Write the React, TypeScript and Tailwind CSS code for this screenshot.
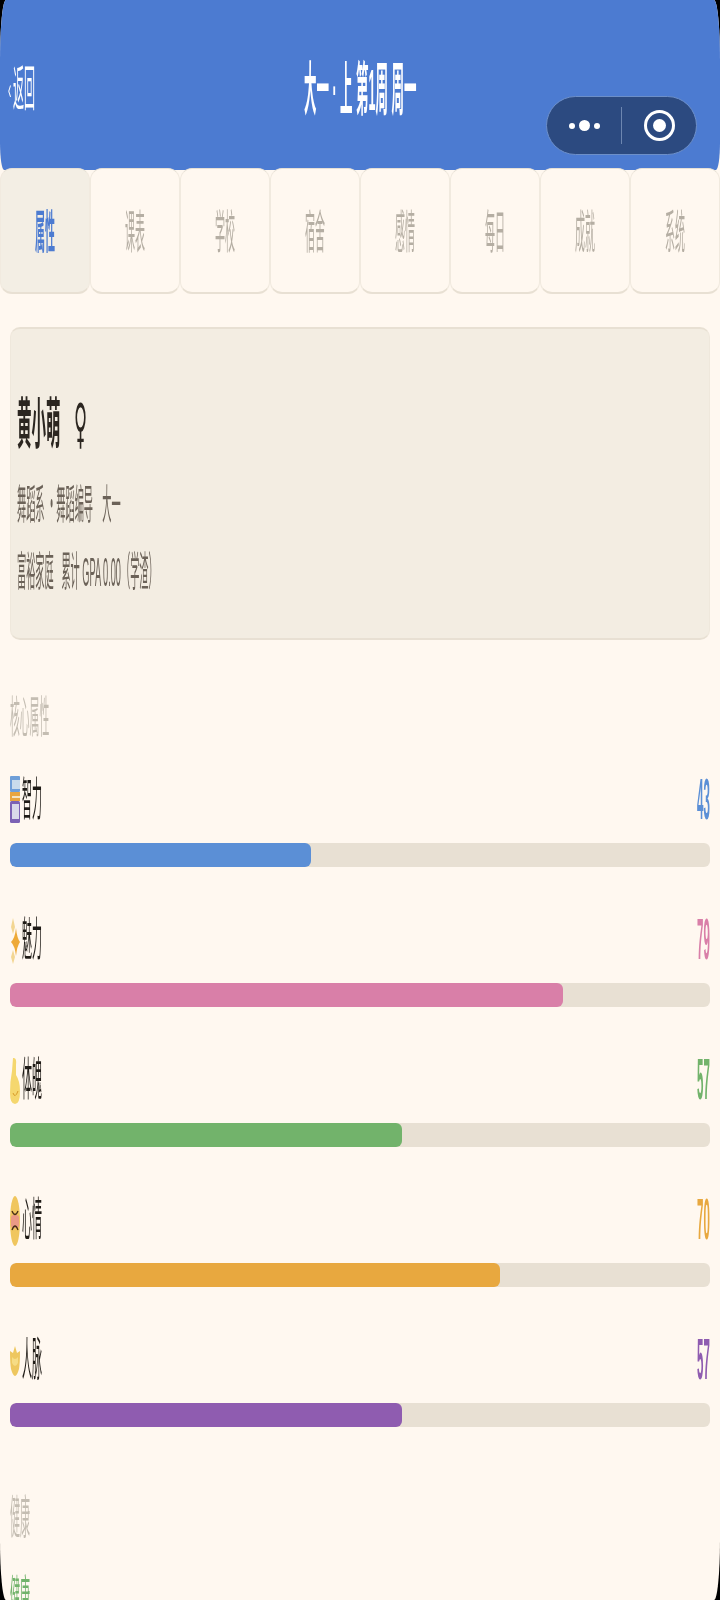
import { ReactNode } from "react";

const cjk = "font-['Liberation_Sans','Noto_Sans_CJK_SC',sans-serif]";

const tabs = ["属性", "课表", "学校", "宿舍", "感情", "每日", "成就", "系统"];

interface Attr {
  label: string;
  value: number;
  shown: number;
  text: string;
  bar: string;
  icon: ReactNode;
}

const BookIcon = () => (
  <svg viewBox="0 0 10 47" className="-mt-[3px] h-[47px] w-[10px]">
    <rect x="0" y="0" width="10" height="16" rx="1" fill="#6f9fd8" />
    <rect x="2" y="4" width="8" height="9" fill="#c9dcec" />
    <rect x="0" y="16" width="10" height="9" fill="#e8a53f" />
    <rect x="2" y="20" width="8" height="2" fill="#f3e3c2" />
    <rect x="0" y="25" width="10" height="22" rx="1.5" fill="#7c62b5" />
    <rect x="2" y="28" width="7" height="15" fill="#d9d9ea" />
  </svg>
);

const SparkleIcon = () => (
  <svg viewBox="0 0 10 46" className="h-[46px] w-[10px]">
    <path d="M3 0 L5 9 L3 16 L1 9 Z" fill="#f3d692" />
    <path d="M6 10 Q7 20 10 24 Q7 28 6 38 Q5 28 1 24 Q5 20 6 10 Z" fill="#eeaa38" />
    <path d="M3 32 L5 39 L3 46 L1 39 Z" fill="#f3d692" />
  </svg>
);

const ArmIcon = () => (
  <svg viewBox="0 0 10 48" className="h-[48px] w-[10px]">
    <path d="M3 1 Q7 0 6 8 L6 18 Q10 24 10 34 Q10 47 5 47 Q0 47 0 36 Q0 24 2 14 Z" fill="#f5d76e" />
    <path d="M3 36 Q5 42 8 34" stroke="#d99c2b" strokeWidth="1" fill="none" />
  </svg>
);

const FaceIcon = () => (
  <svg viewBox="0 0 10 50" className="h-[50px] w-[10px]">
    <ellipse cx="5" cy="25" rx="5" ry="25" fill="#f0c65e" />
    <rect x="1" y="19" width="8" height="13" rx="3" fill="#ea9a85" />
    <path d="M2 15 Q5 22 8 15 M2 34 Q5 26 8 34" stroke="#4a3018" strokeWidth="1.3" fill="none" />
  </svg>
);

const HandIcon = () => (
  <svg viewBox="0 0 10 32" className="h-[32px] w-[10px]">
    <path d="M0 6 L3 8 L5 1 L7 8 L10 6 Q10 18 9 24 Q7 31 5 31 Q3 31 1 24 Q0 18 0 6 Z" fill="#eec75f" />
    <path d="M2 12 Q5 16 8 12 L8 18 Q5 24 2 18 Z" fill="#f6dc85" />
  </svg>
);

const attrs: Attr[] = [
  { label: "智力", value: 43, shown: 43, text: "text-[#5b8fd6]", bar: "bg-[#5b8fd6]", icon: <BookIcon /> },
  { label: "魅力", value: 79, shown: 79, text: "text-[#d97fa8]", bar: "bg-[#d97fa8]", icon: <SparkleIcon /> },
  { label: "体魄", value: 56, shown: 57, text: "text-[#72b36b]", bar: "bg-[#72b36b]", icon: <ArmIcon /> },
  { label: "心情", value: 70, shown: 70, text: "text-[#e8a83f]", bar: "bg-[#e8a83f]", icon: <FaceIcon /> },
  { label: "人脉", value: 56, shown: 57, text: "text-[#8f5cb0]", bar: "bg-[#8f5cb0]", icon: <HandIcon /> },
];

// Tall glyphs: the type is set narrow and stretched along the vertical axis.
const Tall = ({ className, children }: { className?: string; children: ReactNode }) => (
  <span className={`inline-block origin-center whitespace-pre leading-none [will-change:transform] ${className ?? ""}`}>
    {children}
  </span>
);

const AttrRow = ({ attr }: { attr: Attr }) => (
  <div className="h-[140px]">
    <div className="flex h-[68px] items-center justify-between">
      <div className="flex items-center gap-[2px]">
        <span className="flex w-[10px] justify-center">{attr.icon}</span>
        <Tall className="scale-y-[4.6] text-[10px] text-[#1f1b16]">{attr.label}</Tall>
      </div>
      <Tall className={`mt-[3px] scale-y-[5] text-[11.5px] font-bold ${attr.text}`}>{attr.shown}</Tall>
    </div>
    <div className="mt-[8px] h-[24px] overflow-hidden rounded-[6px] bg-[#e8e0d3]">
      <div className={`h-full rounded-[6px] ${attr.bar}`} style={{ width: `${attr.value}%` }} />
    </div>
  </div>
);

export default function App() {
  return (
    <div className={`h-[1600px] w-[720px] overflow-hidden bg-black ${cjk}`}>
      <div className="relative h-full overflow-hidden rounded-[6px/60px] bg-[#fff8f0]">
        <header className="relative flex h-[170px] items-center justify-center rounded-bl-[4px_28px] rounded-br-[4px_28px] bg-[#4c7bd1]">
          <div className="absolute left-[8px] top-[66px] flex h-[48px] items-center gap-[2px] text-white">
            <Tall className="scale-y-[3] text-[10px]">‹</Tall>
            <Tall className="scale-y-[4.4] text-[11px]">返回</Tall>
          </div>
          <div className="absolute left-0 right-0 top-[68px] flex h-[48px] items-center justify-center">
            <Tall className="scale-y-[4.6] text-[12.5px] font-bold text-white">大一 · 上 第1周 周一</Tall>
          </div>
          <div className="absolute left-[546px] top-[96px] flex h-[59px] w-[151px] items-center rounded-full border border-[#6d8fc8] bg-[#2c4a80]">
            <div className="flex flex-1 items-center justify-center gap-[4px]">
              <span className="h-[6px] w-[6px] rounded-full bg-white" />
              <span className="h-[11px] w-[11px] rounded-full bg-white" />
              <span className="h-[6px] w-[6px] rounded-full bg-white" />
            </div>
            <div className="h-[37px] w-px bg-[#6d86b0]" />
            <div className="flex flex-1 items-center justify-center">
              <div className="flex h-[31px] w-[31px] items-center justify-center rounded-full border-[3px] border-white">
                <span className="h-[13px] w-[13px] rounded-full bg-white" />
              </div>
            </div>
          </div>
        </header>

        <nav className="relative -mt-[2px] grid h-[126px] grid-cols-8">
          {tabs.map((tab, i) => (
            <div
              key={tab}
              className={`flex items-center justify-center rounded-[12px] border border-t-[#e6e0d6] border-x-[#f1eadf] border-b-2 border-b-[#e8e0d3] pt-[7px] ${
                i === 0 ? "bg-[#f3eee4]" : "bg-[#fff8f0]"
              }`}
            >
              <Tall className={`scale-y-[4.6] text-[10px] ${i === 0 ? "font-bold text-[#4c7bd1]" : "text-[#b5aea3]"}`}>
                {tab}
              </Tall>
            </div>
          ))}
        </nav>

        <main className="px-[10px]">
          <section className="mt-[33px] h-[313px] rounded-[10px] border border-x-[#efe8dc] border-y-2 border-y-[#e8e0d3] bg-[#f3ede2] px-[6px] pt-[64px]">
            <div className="flex h-[64px] items-center gap-[13px]">
              <Tall className="scale-y-[3.8] text-[14.5px] font-bold text-[#2b2620]">黄小萌</Tall>
              <Tall className="-mt-[3px] scale-y-[3] font-['DejaVu_Sans',sans-serif] text-[18px] font-bold text-[#2b2620]">♀</Tall>
            </div>
            <div className="mt-[32px] flex h-[40px] items-center">
              <Tall className="scale-y-[4.4] text-[9.2px] text-[#6b6258]">舞蹈系 ・舞蹈编导　大一</Tall>
            </div>
            <div className="mt-[27px] flex h-[40px] items-center">
              <Tall className="scale-y-[4.4] text-[9.2px] text-[#6b6258]">富裕家庭   累计 GPA 0.00（学渣）</Tall>
            </div>
          </section>

          <div className="mt-[57px] flex h-[44px] items-center">
            <Tall className="scale-y-[4.5] text-[9.8px] text-[#c4bdb2]">核心属性</Tall>
          </div>

          <div className="mt-[26px]">
            {attrs.map((attr) => (
              <AttrRow key={attr.label} attr={attr} />
            ))}
          </div>

          <div className="mt-[30px] flex h-[44px] items-center">
            <Tall className="scale-y-[4.6] text-[10px] text-[#c4bdb2]">健康</Tall>
          </div>
          <div className="mt-[36px] flex h-[44px] items-center">
            <Tall className="scale-y-[4.6] text-[10px] text-[#72b36b]">健康</Tall>
          </div>
        </main>
      </div>
    </div>
  );
}
